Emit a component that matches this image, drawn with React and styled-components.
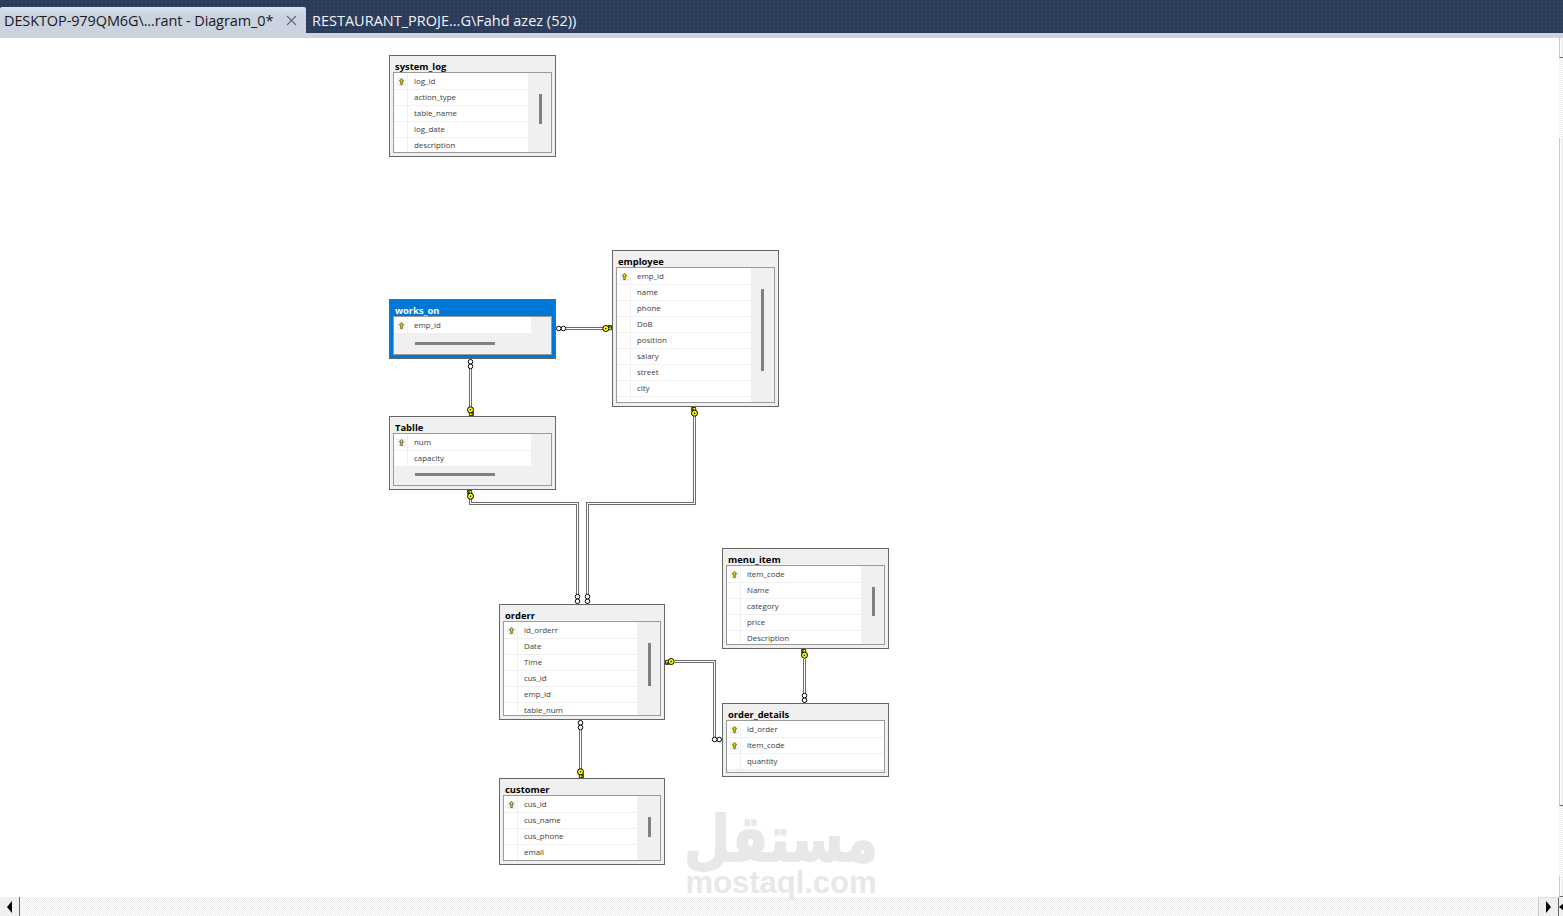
import React from 'react';
import styled, { createGlobalStyle } from 'styled-components';
import { X } from 'lucide-react';

const GlobalStyle = createGlobalStyle`
  html, body {
    margin: 0;
    padding: 0;
    height: 100%;
    overflow: hidden;
    background: #ffffff;
  }
  #root {
    height: 100%;
  }
`;

const CANVAS_TOP = 38;

const tables = [
  {
    name: 'system_log', x: 389, y: 55, w: 167, h: 102, paneWidth: 134,
    rows: ['log_id', 'action_type', 'table_name', 'log_date', 'description'],
    keys: 1, thumb: { left: 145, top: 21, size: 30 },
  },
  {
    name: 'employee', x: 612, y: 250, w: 167, h: 157, paneWidth: 134,
    rows: ['emp_id', 'name', 'phone', 'DoB', 'position', 'salary', 'street', 'city', ''],
    keys: 1, thumb: { left: 144, top: 21, size: 82 },
  },
  {
    name: 'works_on', x: 389, y: 299, w: 167, h: 60, paneWidth: 137, selected: true,
    rows: ['emp_id'], keys: 1, thumb: { horizontal: true, left: 21, top: 25, size: 80 },
  },
  {
    name: 'Tablle', x: 389, y: 416, w: 167, h: 74, paneWidth: 137,
    rows: ['num', 'capacity'], keys: 1, thumb: { horizontal: true, left: 21, top: 39, size: 80 },
  },
  {
    name: 'orderr', x: 499, y: 604, w: 166, h: 116, paneWidth: 133,
    rows: ['id_orderr', 'Date', 'Time', 'cus_id', 'emp_id', 'table_num'],
    keys: 1, thumb: { left: 144, top: 21, size: 43 },
  },
  {
    name: 'menu_item', x: 722, y: 548, w: 167, h: 101, paneWidth: 134,
    rows: ['item_code', 'Name', 'category', 'price', 'Description'],
    keys: 1, thumb: { left: 145, top: 21, size: 29 },
  },
  {
    name: 'order_details', x: 722, y: 703, w: 167, h: 74, paneWidth: 157,
    rows: ['id_order', 'item_code', 'quantity'], keys: 2,
  },
  {
    name: 'customer', x: 499, y: 778, w: 166, h: 87, paneWidth: 133,
    rows: ['cus_id', 'cus_name', 'cus_phone', 'email'],
    keys: 1, thumb: { left: 144, top: 21, size: 20 },
  },
];

const links = [
  { d: 'M566 328.5 H604', key: [612, 328.5, 180], many: [556, 328.5, 0] },
  { d: 'M470.5 369 V407', key: [470.5, 416, 270], many: [470.5, 359, 90] },
  { d: 'M470.5 499 V503.5 H577.5 V595', key: [470.5, 490, 90], many: [577.5, 604, 270] },
  { d: 'M694.5 416 V503.5 H587.5 V595', key: [694.5, 407, 90], many: [587.5, 604, 270] },
  { d: 'M580.5 730 V769', key: [580.5, 778, 270], many: [580.5, 720, 90] },
  { d: 'M675 661.5 H714.5 V739.5 H713', key: [665, 661.5, 0], many: [722, 739.5, 180] },
  { d: 'M804.5 659 V694', key: [804.5, 649, 90], many: [804.5, 703, 270] },
];

// the key sits on the table edge: teeth at 0, bow at +x
const KeyEnd = ({ x, y, angle }) => (
  <g transform={`translate(${x} ${y}) rotate(${angle})`}>
    <path
      d="M0.5 -1.2 H5 V1.2 H3.8 V3 H2.6 V1.2 H1.8 V3 H0.5 Z"
      fill="#ffff00"
      stroke="#000"
      strokeWidth="0.8"
    />
    <circle cx="6.2" cy="0" r="3" fill="#ffff00" stroke="#000" strokeWidth="1" />
    <circle cx="6.2" cy="0" r="0.8" fill="#000" />
  </g>
);

const ManyEnd = ({ x, y, angle }) => (
  <g transform={`translate(${x} ${y}) rotate(${angle})`} fill="#fff" stroke="#000" strokeWidth="1">
    <circle cx="2.8" cy="0" r="2.3" />
    <circle cx="7.4" cy="0" r="2.3" />
  </g>
);

const RowKey = () => (
  <svg width="5" height="7" viewBox="0 0 5 7">
    <path d="M2.5 0.5 L4.6 3 H3.3 V6.5 H1.7 V3 H0.4 Z" fill="#f5e400" stroke="#2b2b00" strokeWidth="0.6" />
  </svg>
);

const Connectors = () => (
  <LinkLayer viewBox={`0 ${CANVAS_TOP} 1559 859`}>
    {links.map((link) => (
      <g key={link.d}>
        <path d={link.d} fill="none" stroke="#6e6e6e" strokeWidth="3" />
        <path d={link.d} fill="none" stroke="#ffffff" strokeWidth="1" />
        <KeyEnd x={link.key[0]} y={link.key[1]} angle={link.key[2]} />
        <ManyEnd x={link.many[0]} y={link.many[1]} angle={link.many[2]} />
      </g>
    ))}
  </LinkLayer>
);

const DiagramTable = ({ table }) => (
  <TableBox $x={table.x} $y={table.y - CANVAS_TOP} $w={table.w} $h={table.h} $selected={table.selected}>
    <TableTitle $selected={table.selected}>{table.name}</TableTitle>
    <Grid>
      <RowsPane $width={table.paneWidth}>
        {table.rows.map((row, index) => (
          <Row key={row || index}>
            <Selector>
              {index < table.keys && (
                <KeyChip>
                  <RowKey />
                </KeyChip>
              )}
            </Selector>
            <Cell>{row}</Cell>
          </Row>
        ))}
      </RowsPane>
      {table.thumb && (
        <Thumb
          $horizontal={table.thumb.horizontal}
          $left={table.thumb.left}
          $top={table.thumb.top}
          $size={table.thumb.size}
        />
      )}
    </Grid>
  </TableBox>
);

const App = () => {
  return (
    <Page>
      <GlobalStyle />
      <TabBar>
        <ActiveTab>
          <TabLabel>DESKTOP-979QM6G\...rant - Diagram_0*</TabLabel>
          <CloseIcon size={17} strokeWidth={1.6} />
        </ActiveTab>
        <InactiveTab>RESTAURANT_PROJE...G\Fahd azez (52))</InactiveTab>
      </TabBar>
      <TabStrip />
      <Workspace>
        <Canvas>
          {tables.map((table) => (
            <DiagramTable key={table.name} table={table} />
          ))}
          <Connectors />
          <Watermark>
            <WatermarkArabic>مستقل</WatermarkArabic>
            <WatermarkLatin>mostaql.com</WatermarkLatin>
          </Watermark>
        </Canvas>
        <VerticalBar>
          <VerticalThumb $height={20} />
          <VerticalTrack $height={80} />
          <VerticalThumb $height={668} />
          <VerticalTrack $height={70} />
          <VerticalThumb $height={21} />
        </VerticalBar>
      </Workspace>
      <HorizontalBar>
        <ScrollButton $width={20}>
          <Arrow $left />
        </ScrollButton>
        <HorizontalTrack />
        <ScrollButton $width={21} $framed>
          <Arrow />
        </ScrollButton>
        <SplitHandle>
          <Arrow $left $small />
        </SplitHandle>
      </HorizontalBar>
    </Page>
  );
};

const Page = styled.div`
  display: flex;
  flex-direction: column;
  width: 1563px;
  height: 916px;
  overflow: hidden;
  background: #ffffff;
`;

const TabBar = styled.div`
  display: flex;
  align-items: flex-end;
  height: 33px;
  padding-top: 7px;
  box-sizing: border-box;
  background-color: #2b3c5b;
  background-image: radial-gradient(rgba(255, 255, 255, 0.035) 1px, transparent 1px);
  background-size: 4px 4px;
  font-family: 'Open Sans', 'Noto Sans', sans-serif;
  font-size: 14.5px;
`;

const ActiveTab = styled.div`
  display: flex;
  align-items: center;
  width: 306px;
  height: 26px;
  padding-left: 4px;
  box-sizing: border-box;
  border-radius: 2px 2px 0 0;
  background: linear-gradient(#dde2ea, #cbd3e0 30%);
  color: #1a1a1a;
`;

const TabLabel = styled.span`
  width: 279px;
  letter-spacing: -0.11px;
  white-space: nowrap;
`;

const CloseIcon = styled(X)`
  color: #5d6676;
`;

const InactiveTab = styled.div`
  display: flex;
  align-items: center;
  height: 26px;
  padding-left: 6px;
  color: #f1f3f6;
  white-space: nowrap;
`;

const TabStrip = styled.div`
  height: 5px;
  background: #ccd4e1;
`;

const Workspace = styled.div`
  display: flex;
  flex: 1;
  min-height: 0;
`;

const Canvas = styled.div`
  position: relative;
  flex: 1;
  background: #ffffff;
`;

const TableBox = styled.div`
  position: absolute;
  left: ${(p) => p.$x}px;
  top: ${(p) => p.$y}px;
  width: ${(p) => p.$w}px;
  height: ${(p) => p.$h}px;
  display: flex;
  flex-direction: column;
  box-sizing: border-box;
  padding: 0 3px 3px;
  border: 1px solid #666666;
  background: ${(p) => (p.$selected ? '#0078d7' : '#f0f0f0')};
`;

const TableTitle = styled.div`
  height: 16px;
  padding-left: 2px;
  line-height: 21px;
  font-family: 'Open Sans', 'Noto Sans', sans-serif;
  font-size: 9.4px;
  font-weight: 700;
  white-space: nowrap;
  color: ${(p) => (p.$selected ? '#ffffff' : '#000000')};
`;

const Grid = styled.div`
  position: relative;
  flex: 1;
  min-height: 0;
  overflow: hidden;
  border: 1px solid #9a9a9a;
  background: #f0f0f0;
`;

const RowsPane = styled.div`
  width: ${(p) => p.$width}px;
  padding-top: 1px;
  background: #ffffff;
`;

const Row = styled.div`
  display: flex;
  height: 16px;
  box-sizing: border-box;
  border-bottom: 1px solid #f0f0f0;
`;

const Selector = styled.div`
  display: flex;
  align-items: center;
  width: 14px;
  padding-left: 3px;
  box-sizing: border-box;
  border-right: 1px solid #f0f0f0;
`;

const KeyChip = styled.div`
  display: flex;
  align-items: center;
  justify-content: center;
  width: 9px;
  height: 8px;
  background: #f0f0f0;
`;

const Cell = styled.div`
  padding-left: 6px;
  line-height: 15px;
  font-family: 'Open Sans', 'Noto Sans', sans-serif;
  font-size: 7.9px;
  color: #3c3c3c;
  white-space: nowrap;
`;

const Thumb = styled.div`
  position: absolute;
  left: ${(p) => p.$left}px;
  top: ${(p) => p.$top}px;
  width: ${(p) => (p.$horizontal ? `${p.$size}px` : '3px')};
  height: ${(p) => (p.$horizontal ? '3px' : `${p.$size}px`)};
  background: #808080;
`;

const LinkLayer = styled.svg`
  position: absolute;
  left: 0;
  top: 0;
  width: 1559px;
  height: 859px;
  pointer-events: none;
`;

const Watermark = styled.div`
  position: absolute;
  left: 687px;
  top: 771px;
  width: 188px;
  display: flex;
  flex-direction: column;
  align-items: center;
  color: #e8e8e8;
  pointer-events: none;
`;

const WatermarkArabic = styled.div`
  height: 60px;
  line-height: 60px;
  font-family: 'DejaVu Sans', sans-serif;
  font-size: 53px;
  font-weight: 700;
  white-space: nowrap;
  transform: scaleY(1.2);
  -webkit-text-stroke: 1.5px #e8e8e8;
`;

const WatermarkLatin = styled.div`
  line-height: 28px;
  font-family: 'Liberation Sans', Arial, sans-serif;
  font-size: 31px;
  font-weight: 700;
  white-space: nowrap;
`;

const dither = `
  background-color: #ffffff;
  background-image: conic-gradient(#ececec 25%, transparent 0 50%, #ececec 0 75%, transparent 0);
  background-size: 2px 2px;
`;

const VerticalBar = styled.div`
  display: flex;
  flex-direction: column;
  width: 4px;
  ${dither}
`;

const VerticalThumb = styled.div`
  height: ${(p) => p.$height}px;
  box-sizing: border-box;
  background: linear-gradient(90deg, #ffffff 1px, #f0f0f0 1px);
  border-left: 1px solid #cccccc;
  border-bottom: 1px solid #696969;
`;

const VerticalTrack = styled.div`
  height: ${(p) => p.$height}px;
`;

const HorizontalBar = styled.div`
  display: flex;
  height: 19px;
  ${dither}
`;

const ScrollButton = styled.div`
  display: flex;
  align-items: center;
  justify-content: center;
  width: ${(p) => p.$width}px;
  box-sizing: border-box;
  background: #f0f0f0;
  border-right: 1px solid #696969;
  ${(p) => p.$framed && 'border-left: 1px solid #cccccc; border-top: 1px solid #e0e0e0;'}
`;

const HorizontalTrack = styled.div`
  flex: 1;
`;

const SplitHandle = styled.div`
  display: flex;
  align-items: center;
  width: 4px;
  background: #f0f0f0;
  overflow: hidden;
`;

const Arrow = styled.div`
  flex: none;
  width: 0;
  height: 0;
  border-top: ${(p) => (p.$small ? 4 : 6)}px solid transparent;
  border-bottom: ${(p) => (p.$small ? 4 : 6)}px solid transparent;
  ${(p) => (p.$left ? 'border-right: 5px solid #000;' : 'border-left: 5px solid #000;')}
`;

export default App;
